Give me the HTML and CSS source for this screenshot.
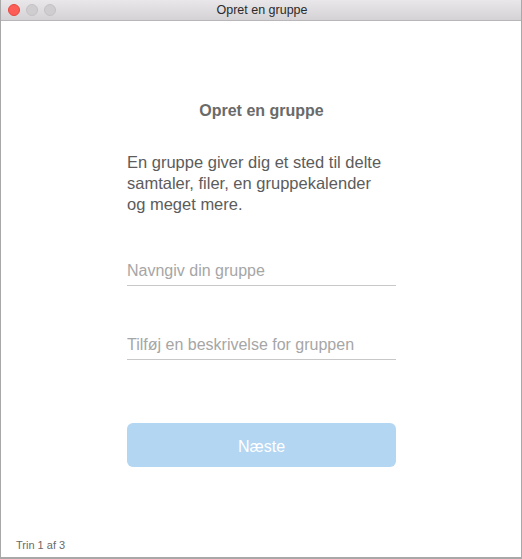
FILE: index.html
```html
<!DOCTYPE html>
<html lang="da">
<head>
<meta charset="utf-8">
<title>Opret en gruppe</title>
<link rel="stylesheet" href="styles.css">
</head>
<body>
<div class="window">
  <div class="titlebar">
    <div class="lights">
      <span class="light close"></span>
      <span class="light"></span>
      <span class="light"></span>
    </div>
    <div class="title">Opret en gruppe</div>
  </div>
  <div class="content">
    <div class="column">
      <h1 class="heading">Opret en gruppe</h1>
      <p class="intro">En gruppe giver dig et sted til delte samtaler, filer, en gruppekalender og meget mere.</p>
      <input class="field field-name" type="text" placeholder="Navngiv din gruppe">
      <input class="field field-desc" type="text" placeholder="Tilføj en beskrivelse for gruppen">
      <button class="next" type="button">Næste</button>
    </div>
    <div class="step">Trin 1 af 3</div>
  </div>
</div>
</body>
</html>
```

FILE: styles.css
```css
* { box-sizing: border-box; }
html, body { margin: 0; padding: 0; background: #fff; }
body { font-family: "Liberation Sans", Arial, sans-serif; }

.window {
  width: 522px;
  height: 559px;
  border: 1px solid #a8a8a8;
  border-top: none;
  border-bottom-width: 2px;
  display: flex;
  flex-direction: column;
  background: #fff;
}

.titlebar {
  height: 21px;
  flex: none;
  background: linear-gradient(#e9e7e9, #d4d2d4);
  border-bottom: 1px solid #b8b6b8;
  display: flex;
  align-items: center;
  justify-content: center;
  position: relative;
}
.lights {
  position: absolute;
  left: 7px;
  top: 4px;
  display: flex;
  gap: 6px;
}
.light {
  width: 12px;
  height: 12px;
  border-radius: 50%;
  background: #cfcdcf;
  border: 1px solid #c4c2c4;
}
.light.close { background: #fc5d57; border-color: #e5493f; }
.title {
  font-size: 12.5px;
  color: #2a2a2a;
  line-height: 20px;
  margin-left: 2px;
}

.content {
  flex: 1;
  display: flex;
  flex-direction: column;
}
.column {
  width: 269px;
  margin: 0 0 0 126px;
  padding-top: 80px;
  display: flex;
  flex-direction: column;
}
.heading {
  margin: 0;
  font-size: 16px;
  font-weight: bold;
  color: #6a6a6a;
  text-align: center;
  line-height: 20px;
}
.intro {
  margin: 31px 0 0;
  max-width: 260px;
  font-size: 16.5px;
  line-height: 21px;
  color: #5c5c5c;
}
.field {
  display: block;
  width: 100%;
  height: 26px;
  padding: 0 0 3px;
  border: none;
  border-bottom: 1px solid #c8c8c8;
  outline: none;
  font-family: inherit;
  font-size: 16px;
  color: #333;
  background: transparent;
}
.field::placeholder { color: #a6a6a6; }
.field-name { margin-top: 45px; }
.field-desc { margin-top: 48px; }
.next {
  margin-top: 63px;
  height: 44px;
  width: 100%;
  padding: 3px 0 0;
  border: none;
  border-radius: 6px;
  background: #b3d6f2;
  color: #fff;
  font-family: inherit;
  font-size: 16px;
}
.step {
  margin-top: auto;
  padding: 0 0 6px 15px;
  font-size: 11px;
  color: #6a6a6a;
}
```
